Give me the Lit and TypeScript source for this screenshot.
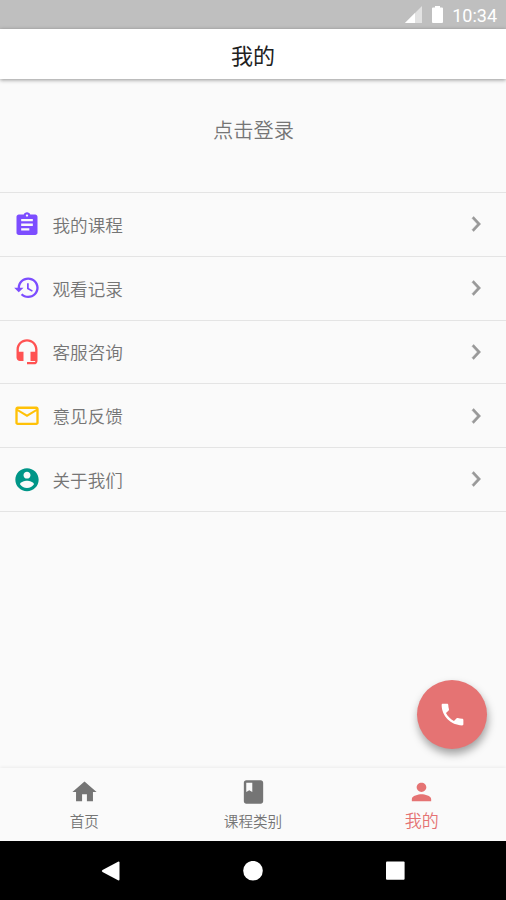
import { LitElement, html, css, svg } from "lit";
import { customElement } from "lit/decorators.js";
import { classMap } from "lit/directives/class-map.js";

const paths: Record<string, string> = {
  course: "M19 3h-4.18C14.4 1.84 13.3 1 12 1s-2.4.84-2.82 2H5c-1.1 0-2 .9-2 2v14c0 1.1.9 2 2 2h14c1.1 0 2-.9 2-2V5c0-1.100-.9-2-2-2zm-7 0c.55 0 1 .45 1 1s-.45 1-1 1-1-.45-1-1 .45-1 1-1zm2 14H7v-2h7v2zm3-4H7v-2h10v2zm0-4H7V7h10v2z",
  history: "M13 3c-4.970 0-9 4.030-9 9H1l3.890 3.890.07.14L9 12H6c0-3.870 3.130-7 7-7s7 3.130 7 7-3.130 7-7 7c-1.930 0-3.680-.79-4.940-2.060l-1.420 1.420C8.270 19.990 10.510 21 13 21c4.970 0 9-4.030 9-9s-4.030-9-9-9zm-1 5v5l4.280 2.540.72-1.210-3.500-2.080V8H12z",
  headset: "M12 1c-4.970 0-9 4.030-9 9v7c0 1.660 1.340 3 3 3h3v-8H5v-2c0-3.870 3.130-7 7-7s7 3.130 7 7v2h-4v8h4v1h-7v2h6c1.660 0 3-1.340 3-3V10c0-4.970-4.030-9-9-9z",
  mail: "M20 4H4c-1.100 0-1.990.9-1.990 2L2 18c0 1.100.9 2 2 2h16c1.100 0 2-.9 2-2V6c0-1.100-.9-2-2-2zm0 14H4V8l8 5 8-5v10zm-8-7L4 6h16l-8 5z",
  account: "M12 2C6.480 2 2 6.480 2 12s4.480 10 10 10 10-4.480 10-10S17.520 2 12 2zm0 3c1.660 0 3 1.340 3 3s-1.340 3-3 3-3-1.340-3-3 1.340-3 3-3zm0 14.200c-2.500 0-4.710-1.280-6-3.220.03-1.990 4-3.080 6-3.080 1.990 0 5.970 1.090 6 3.080-1.290 1.940-3.500 3.220-6 3.220z",
  chevron: "M10 6L8.590 7.410 13.170 12l-4.580 4.590L10 18l6-6z",
  phone: "M6.620 10.790c1.440 2.830 3.760 5.140 6.590 6.590l2.200-2.200c.27-.27.67-.36 1.020-.24 1.120.37 2.330.57 3.570.57.55 0 1 .45 1 1V20c0 .55-.45 1-1 1-9.390 0-17-7.610-17-17 0-.55.45-1 1-1h3.500c.55 0 1 .45 1 1 0 1.250.2 2.450.57 3.570.11.35.03.74-.25 1.020l-2.200 2.200z",
  home: "M10 20v-6h4v6h5v-8h3L12 3 2 12h3v8z",
  book: "M18 2H6c-1.100 0-2 .9-2 2v16c0 1.100.9 2 2 2h12c1.100 0 2-.9 2-2V4c0-1.100-.9-2-2-2zM6 4h5v8l-2.500-1.500L6 12V4z",
  person: "M12 12c2.210 0 4-1.790 4-4s-1.790-4-4-4-4 1.790-4 4 1.790 4 4 4zm0 2c-2.670 0-8 1.340-8 4v2h16v-2c0-2.660-5.330-4-8-4z",
};

const icon = (name: string, cls: string) => html`
  <svg class="icon ${cls}" viewBox="0 0 24 24" preserveAspectRatio="none">${svg`<path d=${paths[name]} />`}</svg>`;

@customElement("app-root")
export class AppRoot extends LitElement {
  static styles = css`
    :host {
      display: flex; flex-direction: column; position: relative;
      width: 506px; height: 900px; overflow: hidden;
      background: #fafafa; color: #757575;
      font-family: "Noto Sans CJK SC", sans-serif; font-weight: 350;
    }
    .icon { display: block; fill: currentColor; flex: none; }
    .status {
      height: 29px; flex: none; background: #bfbfbf; color: #fff;
      display: flex; align-items: center; box-sizing: border-box; padding: 0 9px 0 405px;
    }
    .signal { width: 17px; height: 17px; }
    .battery { width: 11px; height: 17px; margin-left: 10px; }
    .clock { font: 400 18px/29px Roboto, sans-serif; margin-left: auto; padding-top: 2px; }
    .appbar {
      height: 50px; flex: none; background: #fff; color: #212121; z-index: 1;
      box-shadow: 0 1px 4px rgba(0, 0, 0, .42);
      font-size: 22px; font-weight: 400; line-height: 50px; text-align: center;
    }
    .login { height: 113px; flex: none; font-size: 20.200px; line-height: 102px; text-align: center; text-indent: 1px; }
    .list { border-top: 1px solid #e4e4e4; flex: 1; }
    .row {
      height: 63.750px; box-sizing: border-box; border-bottom: 1px solid #e4e4e4;
      display: flex; align-items: center; padding: 0 16px 0 12.500px;
    }
    .lead { width: 28px; height: 27.500px; }
    .label { flex: 1; font-size: 17.600px; line-height: 26px; margin-left: 12px; padding-top: 1px; }
    .go { width: 28px; height: 30px; color: #999; stroke: currentColor; stroke-width: .4; }
    .purple { color: #7c4dff; }
    .red { color: #ff5252; }
    .amber { color: #ffc107; }
    .teal { color: #009688; }
    .fab {
      position: absolute; left: 417px; top: 680px; width: 70px; height: 69px; border-radius: 50%;
      background: #e57373; color: #fff; display: flex; align-items: center; justify-content: center;
      box-shadow: 1px 5px 9px rgba(0, 0, 0, .36);
    }
    .call { width: 29px; height: 29px; }
    .tabs {
      height: 73px; flex: none; display: flex; background: #fafafa;
      box-shadow: 0 -1px 3px rgba(0, 0, 0, .06);
    }
    .tab { flex: 1; display: flex; flex-direction: column; align-items: center; padding-top: 10px; font-size: 14.600px; line-height: 22px; }
    .tab .icon { width: 29px; height: 28px; margin-bottom: 4px; }
    .tab.active { color: #e57373; font-size: 17px; }
    .tab.active .icon { margin-bottom: 3px; }
    .system {
      height: 59px; flex: none; background: #000; fill: #fff;
      display: flex; align-items: center; justify-content: center; gap: 122px;
    }
    .system svg { width: 20px; height: 20px; display: block; }
  `;

  rows = [
    ["course", "purple", "我的课程"],
    ["history", "purple", "观看记录"],
    ["headset", "red", "客服咨询"],
    ["mail", "amber", "意见反馈"],
    ["account", "teal", "关于我们"],
  ];

  tabs = [
    ["home", "首页"],
    ["book", "课程类别"],
    ["person", "我的"],
  ];

  render() {
    return html`
      <div class="status">
        <svg class="signal" viewBox="0 0 17 17"><path d="M0 17L17 0V17z" fill="#e2e2e2" /><path d="M0 17L10 7V17z" fill="#fff" /></svg>
        <svg class="battery" viewBox="0 0 11 17"><path d="M3 0h5v1.500h2q1 0 1 1V16q0 1-1 1H1q-1 0-1-1V2.500q0-1 1-1h2z" fill="#fff" /></svg>
        <span class="clock">10:34</span>
      </div>
      <header class="appbar">我的</header>
      <div class="login">点击登录</div>
      <div class="list">
        ${this.rows.map(([name, tone, label]) => html`
          <div class="row">${icon(name, `lead ${tone}`)}<span class="label">${label}</span>${icon("chevron", "go")}</div>`)}
      </div>
      <nav class="tabs">
        ${this.tabs.map(([name, label], i) => html`
          <div class=${classMap({ tab: true, active: i === 2 })}>${icon(name, "")}<span>${label}</span></div>`)}
      </nav>
      <div class="system">
        <svg viewBox="0 0 20 20"><path d="M17.500 .5q1 0 1 1v17q0 1-1 1L1.500 11q-1.500-1 0-2z" /></svg>
        <svg viewBox="0 0 20 20"><circle cx="10" cy="9.700" r="9.800" /></svg>
        <svg viewBox="0 0 20 20"><rect x="1" y=".5" width="18.600" height="18.300" rx="1" /></svg>
      </div>
      <div class="fab">${icon("phone", "call")}</div>
    `;
  }
}
